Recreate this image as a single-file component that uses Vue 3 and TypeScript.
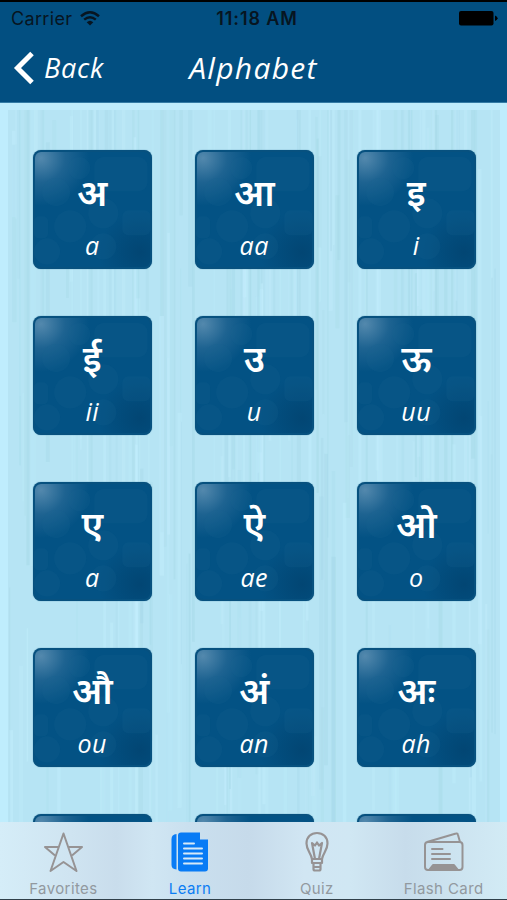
<script setup lang="ts">
interface Letter { glyph: string; sound: string }
interface Streak { x: number; y: number; w: number; h: number; light: boolean; o: number }

const letters: Letter[] = [
  { glyph: 'अ', sound: 'a' }, { glyph: 'आ', sound: 'aa' }, { glyph: 'इ', sound: 'i' },
  { glyph: 'ई', sound: 'ii' }, { glyph: 'उ', sound: 'u' }, { glyph: 'ऊ', sound: 'uu' },
  { glyph: 'ए', sound: 'a' }, { glyph: 'ऐ', sound: 'ae' }, { glyph: 'ओ', sound: 'o' },
  { glyph: 'औ', sound: 'ou' }, { glyph: 'अं', sound: 'an' }, { glyph: 'अः', sound: 'ah' },
  { glyph: '', sound: '' }, { glyph: '', sound: '' }, { glyph: '', sound: '' },
]

// Seeded generator so the brushed background is the same on each load
let seed = 41
const rnd = (): number => {
  seed = (seed * 16807) % 2147483647
  return seed / 2147483647
}
const streaks: Streak[] = Array.from({ length: 230 }, () => ({
  x: 9 + rnd() * 492,
  y: rnd() < 0.35 ? 7 : rnd() * 640,
  w: 1 + rnd() * 3.5,
  h: 80 + rnd() * 420,
  light: rnd() > 0.45,
  o: 0.12 + rnd() * 0.3,
}))
</script>

<template>
  <div class="screen">
    <header class="top">
      <div class="status">
        <div class="carrier">
          <span>Carrier</span>
          <svg width="20" height="15" viewBox="0 0 20 15" fill="none" stroke="#071521" stroke-width="2.5">
            <path d="M1 5.2Q10-2.6 19 5.2M4.2 8.6Q10 3.8 15.8 8.6" />
            <path d="M6.7 11.2Q10 8.2 13.3 11.2L10 14.5Z" fill="#071521" stroke="none" />
          </svg>
        </div>
        <span class="clock">11:18 AM</span>
        <svg class="battery" width="39" height="15" viewBox="0 0 39 15">
          <rect width="34.5" height="14.5" rx="2" /><path d="M36 4.5q2.6 1 2.6 2.8T36 10Z" />
        </svg>
      </div>
      <nav class="nav">
        <div class="back">
          <svg width="22" height="34" viewBox="0 0 22 34" fill="none" stroke="#fff" stroke-width="5"><path d="M20 2.500L5.500 17L20 31.500" /></svg>
          <span>Back</span>
        </div>
        <h1>Alphabet</h1>
      </nav>
    </header>

    <main class="content">
      <svg class="texture" viewBox="0 0 507 719" preserveAspectRatio="none">
        <rect x="8" y="7" width="492" height="712" fill="#a9d9e8" opacity=".42" />
        <rect v-for="(s, i) in streaks" :key="i" :x="s.x" :y="s.y" :width="s.w" :height="s.h" :fill="s.light ? '#c6efff' : '#a3d5e5'" :opacity="s.o" />
      </svg>
      <div class="grid">
        <article v-for="(l, i) in letters" :key="i" class="tile">
          <svg class="spots" viewBox="0 0 118 118" fill="#196692" fill-opacity=".2">
            <rect x="61" y="7" width="53" height="34" rx="9" />
            <circle cx="23" cy="42" r="14" /><circle cx="37" cy="76" r="16" />
            <circle cx="70" cy="63" r="15" /><circle cx="46" cy="18" r="11" />
            <circle cx="14" cy="101" r="13" /><circle cx="70" cy="96" r="13" />
            <rect x="89" y="60" width="28" height="25" rx="6" /><rect x="1" y="66" width="14" height="22" rx="5" />
          </svg>
          <span class="glyph">{{ l.glyph }}</span>
          <span class="sound">{{ l.sound }}</span>
        </article>
      </div>
    </main>

    <footer class="tabs">
      <div class="tab">
        <svg width="40" height="42" viewBox="0 0 40 42" fill="none" stroke="#969394" stroke-width="2" stroke-linejoin="round">
          <path d="M20.500 2.500L33.500 40L20.500 31L7.500 40Z" />
          <path d="M15.500 16H2L12 24.500M25.500 16H39L29 24.500" />
        </svg>
        <span>Favorites</span>
      </div>
      <div class="tab active">
        <svg width="40" height="42" viewBox="0 0 40 42">
          <path d="M6.500 3V38.500Q1.500 38 1.500 34V8Q1.500 3.500 6.500 3Z" fill="#087bf5" />
          <path d="M11 1.500H30V8.500H38V37.500Q38 40.500 35 40.500H11Q8 40.500 8 37.500V4.500Q8 1.500 11 1.500Z" fill="#087bf5" />
          <path d="M14 12.500H24M14 17.500H32M14 22.500H32M14 27.500H32M14 32.500H32" stroke="#d5e9f8" stroke-width="2" stroke-linecap="round" />
        </svg>
        <span>Learn</span>
      </div>
      <div class="tab">
        <svg width="40" height="42" viewBox="0 0 40 42" fill="none" stroke="#969394" stroke-width="2.200" stroke-linejoin="round">
          <path d="M15 28C14 22 9.500 19 9.500 12.500C9.500 6 14 2 20 2S30.500 6 30.500 12.500C30.500 19 26 22 25 28Z" />
          <path d="M18 28L15 12L18 14.500L20 11.500L22 14.500L25 12L22 28M15 28V32H25V28M16.500 32V38Q16.500 39.500 18 39.500H22Q23.500 39.500 23.500 38V32M16.500 36H23.500" />
        </svg>
        <span>Quiz</span>
      </div>
      <div class="tab">
        <svg width="42" height="42" viewBox="0 0 42 42" fill="none" stroke="#969394" stroke-width="2" stroke-linejoin="round">
          <rect x="2" y="11" width="37.500" height="28" rx="3" />
          <path d="M4 11L33 2.500Q34.500 2 35 4L37 11" />
          <path d="M9 18H19.500M9 23H27M9 28H27" stroke-linecap="round" />
          <path d="M6 39L10 34H31L35 39Z" fill="#969394" />
        </svg>
        <span>Flash Card</span>
      </div>
    </footer>
  </div>
</template>

<style>
body { margin: 0; }
</style>
<style scoped>
* { box-sizing: border-box; }
.screen {
  width: 507px; height: 900px; overflow: hidden; display: flex; flex-direction: column;
  font-family: Inter, "Liberation Sans", sans-serif; background: #bfedfd;
}
.top { flex: none; height: 103px; background: #024f81; border-top: 2px solid #000; border-bottom: 1px solid #347ca6; }
.status { height: 33px; padding: 0 9px 0 11px; display: grid; grid-template-columns: 1fr auto 1fr; align-items: center; color: #071521; font-size: 18px; }
.carrier { display: flex; align-items: center; gap: 8px; letter-spacing: .35px; }
.clock { font-weight: 600; font-size: 18px; letter-spacing: .9px; padding-left: 5px; }
.battery { justify-self: end; fill: #000; }
.nav { height: 67px; display: grid; grid-template-columns: 1fr auto 1fr; align-items: center; padding: 0 12px 2px; color: #fff; font-family: "Open Sans", sans-serif; font-style: italic; }
.back { display: flex; align-items: center; gap: 10px; font-size: 27px; letter-spacing: .8px; }
h1 { margin: 0; font-size: 30px; font-weight: 400; letter-spacing: 1.3px; }
.content { position: relative; flex: 1; min-height: 0; overflow: hidden; }
.texture { position: absolute; inset: 0; width: 100%; height: 100%; filter: blur(.5px); }
.grid { position: relative; padding: 47px 32px 0 33px; display: grid; grid-template-columns: repeat(3, 118.5px); column-gap: 43.5px; row-gap: 47.500px; grid-auto-rows: 118.500px; }
.tile {
  position: relative; overflow: hidden; border-radius: 8px; color: #fff; display: flex; flex-direction: column; align-items: center;
  background: radial-gradient(circle at 90% 86%, rgba(0,55,95,.45), transparent 28%), radial-gradient(ellipse 48px 48px at 8px 8px, rgba(110,155,187,.75), rgba(70,125,165,.4) 50%, transparent 100%), #035284;
  box-shadow: inset 0 0 0 2px #07517f, 0 0 1px #24688f;
}
.spots { position: absolute; inset: 0; width: 100%; height: 100%; }
.glyph { position: relative; height: 76px; padding-top: 13px; font: 600 37px/68px "Noto Sans Devanagari", "Noto Sans", sans-serif; }
.sound { position: relative; font: italic 400 25px/38px "Open Sans", sans-serif; letter-spacing: .5px; }
.tabs {
  flex: none; height: 78px; border-bottom: 1px solid #30404a; display: grid; grid-template-columns: repeat(4, 1fr); padding-top: 9px;
  background: linear-gradient(90deg, #d5edf8 0, #cfe4f1 14%, #c9ddec 23%, #d0e6f3 30%, #cae0ef 37%, #c6daea 49%, #d1e6f3 60%, #d0e7f3 69%, #c7dceb 80%, #d2ebf5 100%);
}
.tab { display: flex; flex-direction: column; align-items: center; gap: 7px; color: #92999f; font-size: 15px; line-height: 18px; letter-spacing: .4px; }
.active { color: #0b7df4; }
</style>
